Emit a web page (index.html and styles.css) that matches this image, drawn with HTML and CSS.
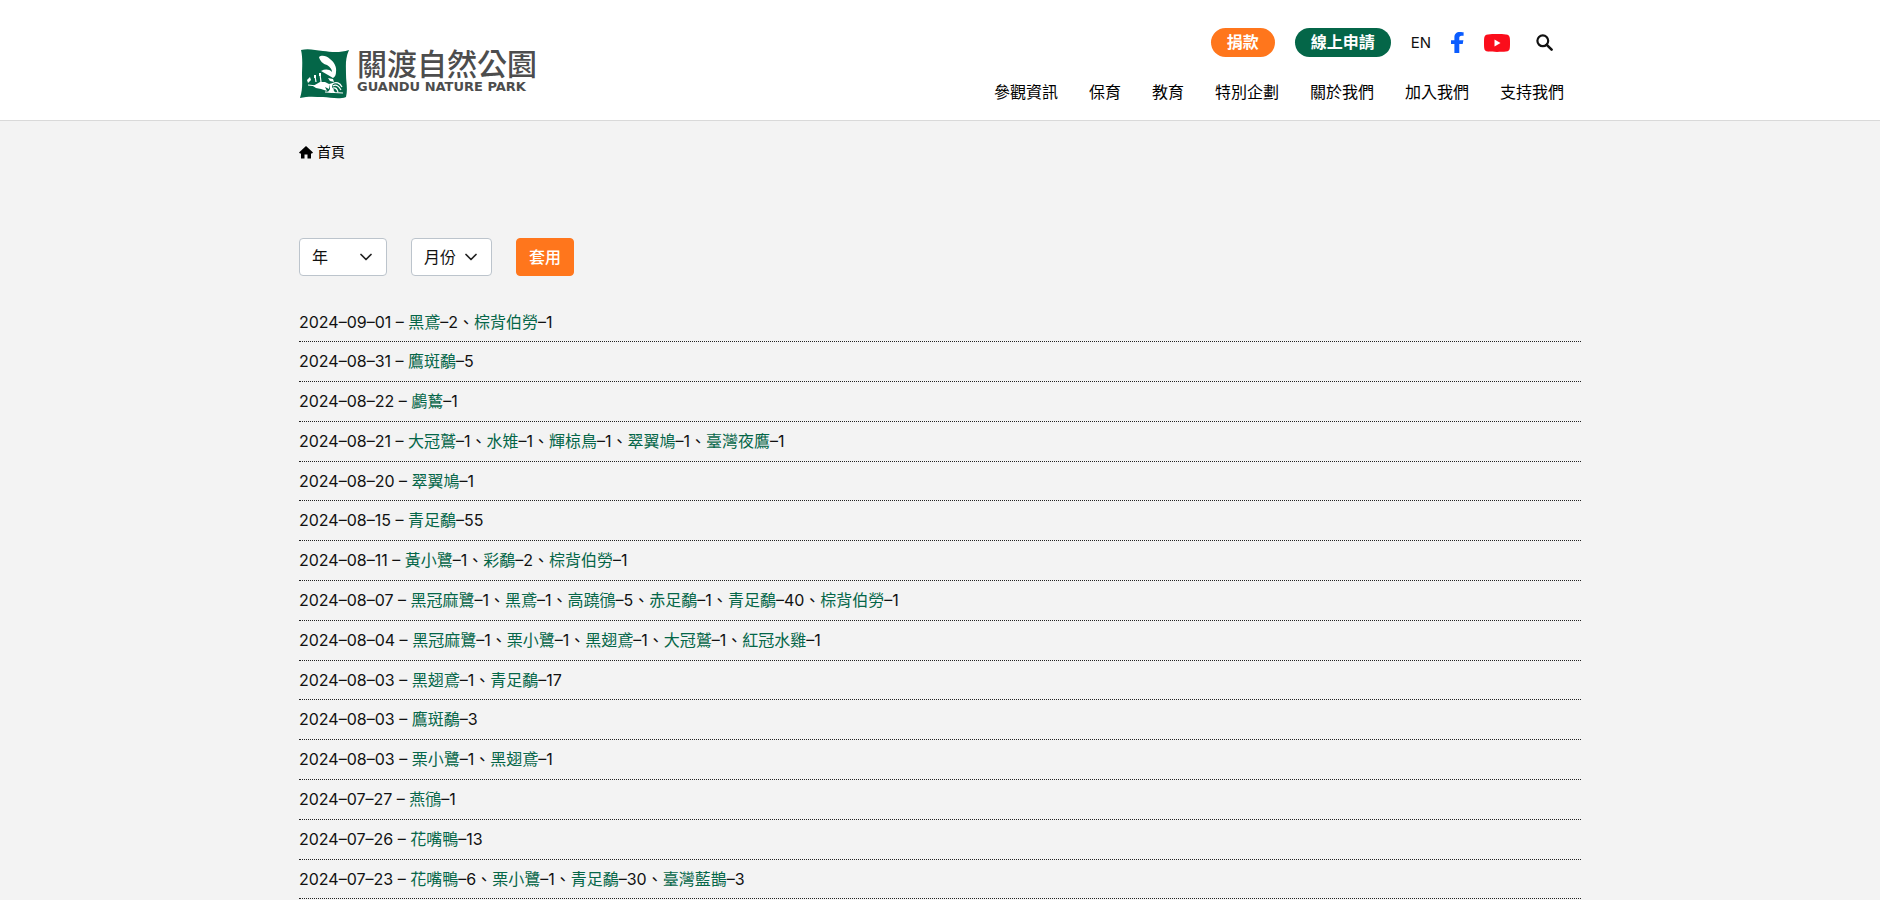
FILE: index.html
```html
<!DOCTYPE html>
<html lang="zh-Hant">
<head>
<meta charset="utf-8">
<meta name="viewport" content="width=device-width, initial-scale=1">
<title>關渡自然公園</title>
<link rel="stylesheet" href="styles.css">
</head>
<body>
<header class="site-header">
  <div class="container header-inner">
    <a class="logo" href="#">
      <svg class="logo-mark" viewBox="0 0 50 50" aria-hidden="true">
        <path fill="#046648" d="M2 1C9 -1 16 1 24 2S41 4 50 1C46 10 47 17 47 25S49 40 47 48C39 51 31 48 24 48S9 47 1 49C4 40 3 33 3 26S4 9 2 1Z"/>
        <g fill="#fff">
          <path d="M20 8C22 6 27 6 31 10C35 13 38 18 37 23C37 26 36 28 34 29L29 26L22 22C26 20 30 20 33 23C33 20 31 18 28 16C24 15 21 12 20 8Z"/>
          <path d="M29 29L34 30L35 33L31 32Z"/>
          <path d="M14 37L21 33L26 33L30 35L30 40L26 38L28 42L22 40L17 39Z"/>
          <path d="M8 31L11 28L12 31L9 34Z"/>
          <path d="M30 35L34 34L33 38L35 41L33 44L29 43L31 40Z"/>
        </g>
        <path fill="none" stroke="#fff" stroke-width="1.2" d="M16 27L17 33M21 25L22 33M9 36L18 37M33 35C37 32 41 34 43 38M34 37C37 35 40 37 42 41M34 39C37 38 38 40 39 43M33 41L36 44M26 43L44 44"/>
        <path fill="#fff" d="M15 26H17V29H15ZM20 24H22V27H20Z"/>
      </svg>
      <span class="logo-text">
        <span class="logo-zh">關渡自然公園</span>
        <span class="logo-en">GUANDU NATURE PARK</span>
      </span>
    </a>
    <div class="header-nav">
      <div class="top-links">
        <a class="pill pill-orange" href="#">捐款</a>
        <a class="pill pill-green" href="#">線上申請</a>
        <a class="lang" href="#">EN</a>
        <a class="icon-link" href="#" aria-label="Facebook">
          <svg width="13" height="21" viewBox="0 0 13 21"><path fill="#0a5cff" d="M3.4 21V12H0V8.2H3.4V5.4C3.4 1.9 5.4 0 8.8 0C10.4 0 12.6.3 12.6.3V3.7H10.6C8.8 3.7 8.3 4.7 8.3 5.8V8.2H12.4L11.7 12H8.3V21Z"/></svg>
        </a>
        <a class="icon-link" href="#" aria-label="YouTube">
          <svg width="26" height="18" viewBox="0 0 26 18"><path fill="#fb0d1b" d="M4 .4C9 0 17 0 22 .4C24.500 .6 25.600 1.800 25.800 4C26.100 7 26.100 11 25.800 14C25.600 16.200 24.500 17.400 22 17.600C17 18 9 18 4 17.600C1.500 17.400.4 16.200.2 14C-.1 11-.1 7 .2 4C.4 1.800 1.500.6 4 .4Z"/><path fill="#fff" d="M10.500 5.500L16.500 9L10.500 12.500Z"/></svg>
        </a>
        <button class="search" type="button" aria-label="搜尋">
          <svg width="17" height="17" viewBox="0 0 17 17"><circle cx="6.800" cy="6.800" r="5.400" fill="none" stroke="#111" stroke-width="2.200"/><path d="M10.800 10.800L15.600 15.600" stroke="#111" stroke-width="2.600" stroke-linecap="round"/></svg>
        </button>
      </div>
      <nav class="main-nav">
        <a href="#">參觀資訊</a>
        <a href="#">保育</a>
        <a href="#">教育</a>
        <a href="#">特別企劃</a>
        <a href="#">關於我們</a>
        <a href="#">加入我們</a>
        <a href="#">支持我們</a>
      </nav>
    </div>
  </div>
</header>
<main class="container">
  <nav class="breadcrumb">
    <a href="#">
      <svg width="14" height="13" viewBox="0 0 14 13" aria-hidden="true"><path d="M7 0L14 6.500L13 7.500H12V12.500H8.500V8.500H5.500V12.500H2V7.500H1L0 6.500Z"/></svg>
      首頁
    </a>
  </nav>
  <form class="filters">
    <select class="field year" aria-label="年"><option>年</option></select>
    <select class="field month" aria-label="月份"><option>月份</option></select>
    <button class="apply" type="button">套用</button>
  </form>
  <ul class="records">
    <li>2024–09–01 – <a href="#">黑鳶</a>–2、<a href="#">棕背伯勞</a>–1</li>
    <li>2024–08–31 – <a href="#">鷹斑鷸</a>–5</li>
    <li>2024–08–22 – <a href="#">鸕鶿</a>–1</li>
    <li>2024–08–21 – <a href="#">大冠鷲</a>–1、<a href="#">水雉</a>–1、<a href="#">輝椋鳥</a>–1、<a href="#">翠翼鳩</a>–1、<a href="#">臺灣夜鷹</a>–1</li>
    <li>2024–08–20 – <a href="#">翠翼鳩</a>–1</li>
    <li>2024–08–15 – <a href="#">青足鷸</a>–55</li>
    <li>2024–08–11 – <a href="#">黃小鷺</a>–1、<a href="#">彩鷸</a>–2、<a href="#">棕背伯勞</a>–1</li>
    <li>2024–08–07 – <a href="#">黑冠麻鷺</a>–1、<a href="#">黑鳶</a>–1、<a href="#">高蹺鴴</a>–5、<a href="#">赤足鷸</a>–1、<a href="#">青足鷸</a>–40、<a href="#">棕背伯勞</a>–1</li>
    <li>2024–08–04 – <a href="#">黑冠麻鷺</a>–1、<a href="#">栗小鷺</a>–1、<a href="#">黑翅鳶</a>–1、<a href="#">大冠鷲</a>–1、<a href="#">紅冠水雞</a>–1</li>
    <li>2024–08–03 – <a href="#">黑翅鳶</a>–1、<a href="#">青足鷸</a>–17</li>
    <li>2024–08–03 – <a href="#">鷹斑鷸</a>–3</li>
    <li>2024–08–03 – <a href="#">栗小鷺</a>–1、<a href="#">黑翅鳶</a>–1</li>
    <li>2024–07–27 – <a href="#">燕鴴</a>–1</li>
    <li>2024–07–26 – <a href="#">花嘴鴨</a>–13</li>
    <li>2024–07–23 – <a href="#">花嘴鴨</a>–6、<a href="#">栗小鷺</a>–1、<a href="#">青足鷸</a>–30、<a href="#">臺灣藍鵲</a>–3</li>
  </ul>
</main>
</body>
</html>
```
FILE: styles.css
```css
* {
  box-sizing: border-box;
}

body {
  margin: 0;
  background: #f3f3f3;
  color: #111;
  font: 16px/24px Inter, "Noto Sans CJK TC", sans-serif;
}

a {
  color: inherit;
  text-decoration: none;
}

svg {
  display: block;
}

.container {
  width: 100%;
  max-width: 1282px;
  margin: 0 auto;
}

.site-header {
  background: #fff;
  border-bottom: 1px solid #d9d9d9;
}

.header-inner {
  display: flex;
  justify-content: space-between;
  align-items: flex-start;
  padding: 28px 0 16px;
}

.logo {
  display: flex;
  gap: 8px;
  padding-top: 21px;
}

.logo-mark {
  width: 50px;
  height: 50px;
}

.logo-text {
  display: flex;
  flex-direction: column;
  color: #4d4d4d;
  white-space: nowrap;
}

.logo-zh {
  font-size: 30px;
  line-height: 31px;
  font-weight: 500;
}

.logo-en {
  font: bold 13px/14px "DejaVu Sans", sans-serif;
}

.header-nav {
  display: flex;
  flex-direction: column;
  align-items: flex-end;
  gap: 23px;
}

.top-links {
  display: flex;
  align-items: center;
  gap: 20px;
  padding-right: 28px;
}

.pill {
  padding: 2px 16px 3px;
  border-radius: 15px;
  color: #fff;
  font-weight: 700;
}

.pill-orange {
  background: #ff761c;
}

.pill-green {
  background: #046648;
}

.lang {
  font-size: 15px;
}

.search {
  margin-left: 6px;
  padding: 0;
  border: 0;
  background: none;
}

.main-nav {
  display: flex;
  gap: 31px;
  padding-right: 17px;
}

.main-nav a {
  color: #000;
}

.breadcrumb {
  padding-top: 19px;
  font-size: 14px;
  color: #000;
}

.breadcrumb a {
  display: inline-flex;
  align-items: center;
  gap: 4px;
}

.filters {
  display: flex;
  gap: 24px;
  padding-top: 72px;
}

.field,
.apply {
  height: 38px;
  border: 1px solid #bcc4cc;
  border-radius: 4px;
  font: inherit;
}

.field {
  appearance: none;
  padding: 0 12px;
  color: #111;
  background: #fff url("data:image/svg+xml,%3Csvg xmlns='http://www.w3.org/2000/svg' viewBox='0 0 12 8'%3E%3Cpath d='M1 1.500l5 5 5-5' fill='none' stroke='%23222' stroke-width='1.700' stroke-linecap='round' stroke-linejoin='round'/%3E%3C/svg%3E") no-repeat right 14px center / 12px 8px;
}

.year {
  width: 88px;
}

.month {
  width: 81px;
}

.apply {
  padding: 0 12px;
  border-color: #ff761c;
  background: #ff761c;
  color: #fff;
  font-weight: 500;
}

.records {
  margin: 0;
  padding: 27px 0 0;
  list-style: none;
  line-height: 1.55;
}

.records li {
  padding: 7px 0;
  border-bottom: 1px dotted #222;
}

.records a {
  color: #046648;
}
```
